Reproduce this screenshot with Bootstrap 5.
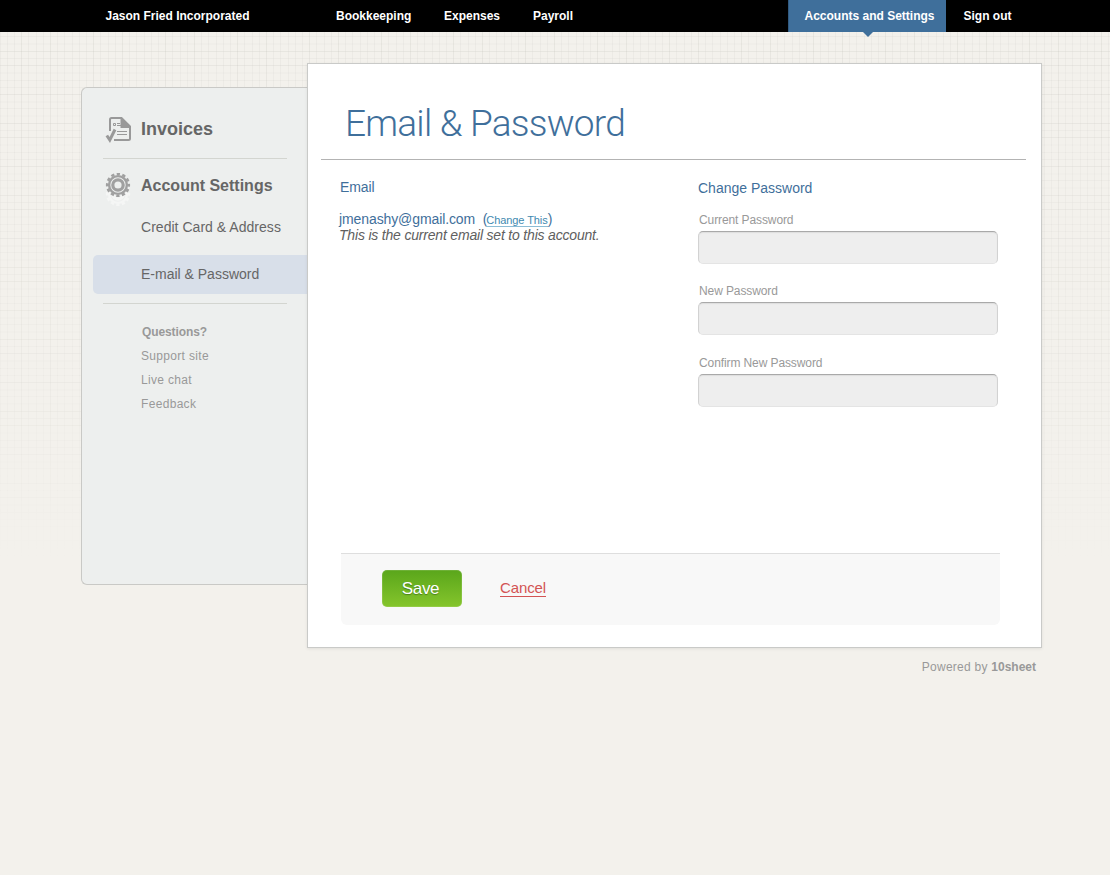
<!DOCTYPE html>
<html lang="en">
<head>
<meta charset="utf-8">
<meta name="viewport" content="width=device-width, initial-scale=1">
<title>Email &amp; Password</title>
<link href="https://cdn.jsdelivr.net/npm/bootstrap@5.3.0/dist/css/bootstrap.min.css" rel="stylesheet">
<style>
body{font-family:"Liberation Sans",Arial,sans-serif;background:#f3f1ec;color:#999;min-height:875px;position:relative;line-height:16px;font-size:12px}
a{text-decoration:none;color:inherit}
/* graph paper that fades out down the page */
.graph-paper{position:absolute;left:0;top:32px;width:100%;height:530px;z-index:-1;
-webkit-mask-image:linear-gradient(#000,rgba(0,0,0,.5) 70%,transparent);mask-image:linear-gradient(#000,rgba(0,0,0,.5) 70%,transparent)}
.topbar{height:32px;background:#000;color:#fff;font-weight:700;padding:0 99px 0 105.5px;white-space:nowrap}
.brand-name{width:230.5px}
.nav-books{width:108px}
.nav-expenses{width:89px}
.current-tab{background:#3f6f9b;width:158px;height:32px;position:relative;border-left:1px solid #315a80;padding-left:15.5px}
.current-tab::after{content:"";position:absolute;left:74px;top:32px;border:5px solid transparent;border-top-color:#3f6f9b;border-bottom:0}
.sign-out{margin-left:17.5px;width:47.5px}
.shell{padding:31px 68px 0 81px}
.side{width:226px;height:498px;margin-top:24px;background:#edefee;border:1px solid #c9c9c6;border-right:0;border-radius:6px 0 0 6px;white-space:nowrap}
.side-head{color:#666;font-weight:700;padding-left:24px;gap:11px}
.side-head svg{overflow:visible;width:24px;height:26px;flex:none}
.head-invoices{height:70px;padding-top:11px;font-size:18px}
.head-settings{height:53px;font-size:16px}
.side-rule{height:1px;background:#d3d5d0;margin:0 20px 0 21px}
.side-link{color:#666;font-size:14px;height:31px;padding:0 0 2px 59px;letter-spacing:.03px}
.side-link.active{background:#d8dfe9;height:39px;border-radius:5px 0 0 5px;margin:12px 0 9px 11px;padding-left:48px;letter-spacing:0}
.help-links{padding:16px 0 0 59px;line-height:24px;letter-spacing:.32px}
.help-links b{letter-spacing:-.1px;padding-left:1px}
.sheet{width:735px;height:585px;background:#fff;border:1px solid #c9cac8;box-shadow:0 1px 3px rgba(0,0,0,.08);padding:0 15px 0 13px}
.sheet-title{font:300 37px/44px Roboto,sans-serif;letter-spacing:-.78px;color:#3f6f9b;margin:0;padding:38px 0 0 24px;height:96px;border-bottom:1px solid #b3b3b3;white-space:nowrap}
.form-area{height:393px}
.blue{color:#3f6f9b;font-size:14px;line-height:16px;font-weight:400;margin:0}
.left-col{width:377px;padding:19px 0 0 18px}
.left-col h2{padding-left:1px;margin-bottom:16px;letter-spacing:-.1px}
.mail{letter-spacing:-.1px}
.change-link{font-size:11px;color:#4189b0;border-bottom:1px solid #8dbdd5;line-height:12px;display:inline-block;letter-spacing:-.07px;margin-left:-1px}
.note{color:#606060;font-size:14px;font-style:italic;letter-spacing:-.19px;margin:0}
.right-col{padding-top:20px}
.field-label{display:block;padding-left:1px;letter-spacing:-.1px;line-height:16px}
.right-col .field-box{height:33px;width:300px;background:#eee;border:1px solid #d2d2d2;border-top-color:#a9a9a9;border-bottom-color:#e4e4e4;border-radius:5px;box-shadow:inset 0 1px 1px #ddd;padding:0 8px;margin-top:3px}
.actions{background:#f8f8f8;border-top:1px solid #dedede;border-radius:0 0 6px 6px;height:72px;width:659px;margin-left:20px;padding:0 0 2px 41px}
.save-btn{width:80px;height:37px;border:0;border-radius:5px;background:linear-gradient(#5aa61b,#85c52c);color:#fff;font-size:17px;line-height:20px;padding:1px 3px 0 0;letter-spacing:-.3px;text-shadow:0 1px 1px #487f18;box-shadow:inset 0 0 0 1px rgba(255,255,255,.12)}
.cancel-link{color:#d35454;font-size:15px;border-bottom:1px solid #d35454;line-height:16px;margin-left:38px;letter-spacing:-.1px}
.credit{padding:11px 74px 0 0;letter-spacing:.25px}
.credit b{letter-spacing:0}
</style>
</head>
<body>
<svg class="graph-paper" aria-hidden="true">
<defs>
<pattern id="cols" width="72" height="10" patternUnits="userSpaceOnUse"><g stroke="#55554a" stroke-opacity=".04"><path d="M.5 0v10M7.5 0v10M14.5 0v10M28.500 0v10M36.500 0v10M43.500 0v10M57.500 0v10M64.500 0v10"/><path d="M21.500 0v10M50.500 0v10" stroke-opacity=".07"/></g></pattern>
<pattern id="rows" width="10" height="72" patternUnits="userSpaceOnUse"><g stroke="#55554a" stroke-opacity=".04"><path d="M0 4.500h10M0 12h10M0 26.500h10M0 41h10M0 48.500h10M0 55.500h10M0 70h10"/><path d="M0 19.500h10M0 33.500h10M0 62.500h10" stroke-opacity=".07"/></g></pattern>
</defs>
<rect width="100%" height="100%" fill="url(#cols)"/><rect width="100%" height="100%" fill="url(#rows)"/>
</svg>
<nav class="topbar d-flex align-items-center">
<a class="brand-name" href="#">Jason Fried Incorporated</a>
<a class="nav-books" href="#">Bookkeeping</a>
<a class="nav-expenses" href="#">Expenses</a>
<a href="#">Payroll</a>
<a class="current-tab ms-auto d-flex align-items-center" href="#">Accounts and Settings</a>
<a class="sign-out" href="#">Sign out</a>
</nav>
<div class="shell d-flex">
<aside class="side">
<a class="side-head head-invoices d-flex align-items-center" href="#">
<svg viewBox="0 0 24 26"><g fill="none" stroke="#999" stroke-width="2"><path d="M4 15V3.500Q4 2 5.500 2H15.500L24 10.500V22.500Q24 24 22.500 24H8"/><path d="M11 15.500h10M11 18.500h10" stroke-width="1"/><path d="M7.500 7.500h2v2h-2zM11 7.500h3M11 9.500h4" stroke-width="1"/></g><path d="M14.500 1V12H25z" fill="#999"/><path d="M.8 19.500l3 4.500L9 13.500" fill="none" stroke="#999" stroke-width="3"/></svg>
<span>Invoices</span></a>
<div class="side-rule"></div>
<a class="side-head head-settings d-flex align-items-center" href="#">
<svg viewBox="0 0 24 26"><defs><g id="gear"><circle cx="12" cy="12" r="8.900" fill="none" stroke-width="2.400"/><circle cx="12" cy="12" r="10.900" fill="none" stroke-width="2.400" stroke-dasharray="3.300 2.407" stroke-dashoffset="1.650"/><circle cx="12" cy="12" r="5.200" fill="none" stroke-width="3.200"/></g></defs><use href="#gear" y="9" stroke="#f5f6f5"/><circle cx="12" cy="12" r="10" fill="#edefee"/><use href="#gear" stroke="#a0a0a0"/></svg>
<span>Account Settings</span></a>
<a class="side-link d-flex align-items-center" href="#">Credit Card &amp; Address</a>
<a class="side-link active d-flex align-items-center" href="#">E-mail &amp; Password</a>
<div class="side-rule"></div>
<div class="help-links d-flex flex-column">
<b>Questions?</b>
<a href="#">Support site</a>
<a href="#">Live chat</a>
<a href="#">Feedback</a>
</div>
</aside>
<main class="sheet">
<h1 class="sheet-title">Email &amp; Password</h1>
<div class="form-area d-flex">
<section class="left-col">
<h2 class="blue">Email</h2>
<p class="blue mail">jmenashy@gmail.com&nbsp; (<a class="change-link" href="#">Change This</a>)</p>
<p class="note">This is the current email set to this account.</p>
</section>
<section class="right-col">
<h2 class="blue mb-3">Change Password</h2>
<div style="margin-bottom:19px"><label class="field-label" for="cur">Current Password</label><input class="form-control field-box" type="password" id="cur"></div>
<div style="margin-bottom:20px"><label class="field-label" for="new">New Password</label><input class="form-control field-box" type="password" id="new"></div>
<div><label class="field-label" for="conf">Confirm New Password</label><input class="form-control field-box" type="password" id="conf"></div>
</section>
</div>
<div class="actions d-flex align-items-center">
<button class="btn save-btn" type="button">Save</button>
<a class="cancel-link" href="#">Cancel</a>
</div>
</main>
</div>
<footer class="credit text-end">Powered by <b>10sheet</b></footer>
<script src="https://cdn.jsdelivr.net/npm/bootstrap@5.3.0/dist/js/bootstrap.bundle.min.js"></script>
</body>
</html>
